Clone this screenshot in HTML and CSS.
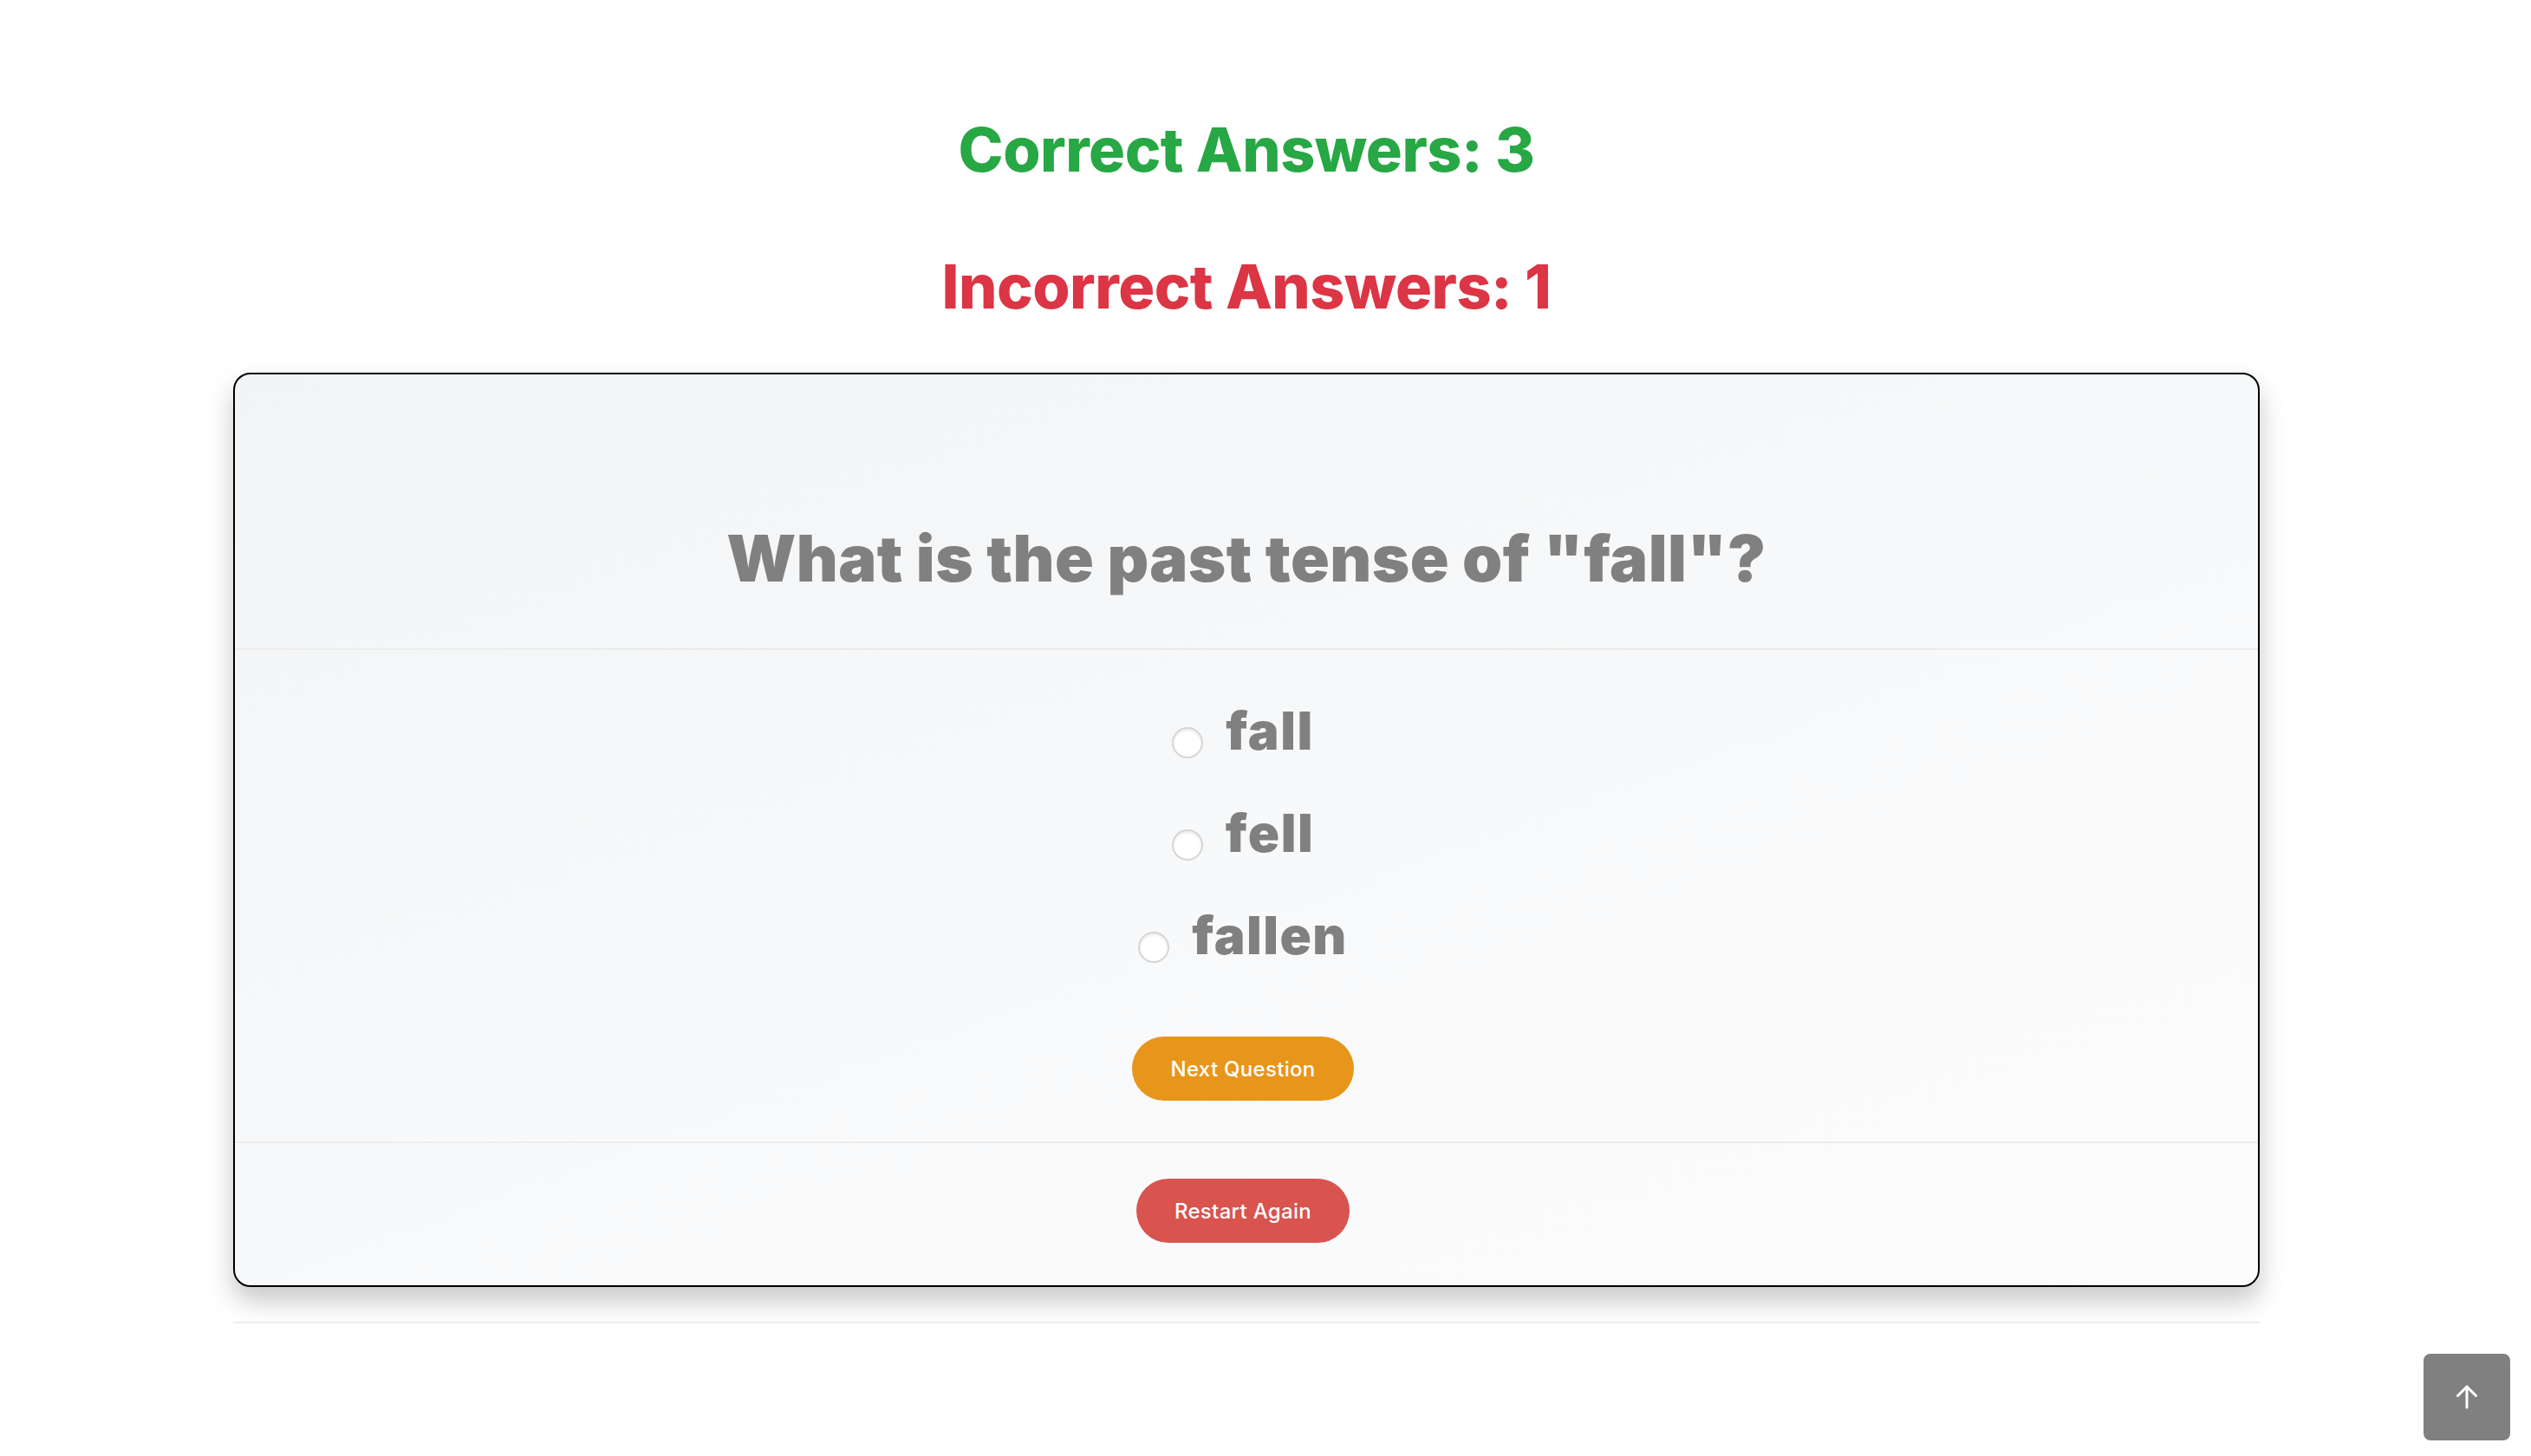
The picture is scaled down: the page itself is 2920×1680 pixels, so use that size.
FILE: index.html
```html
<!DOCTYPE html>
<html lang="en">
<head>
<meta charset="utf-8">
<title>Quiz</title>
<link rel="stylesheet" href="styles.css">
</head>
<body>
<main class="page">
  <h1 class="score score-correct">Correct Answers: 3</h1>
  <h1 class="score score-incorrect">Incorrect Answers: 1</h1>
  <section class="card">
    <div class="card-header">
      <h2 class="question">What is the past tense of "fall"?</h2>
    </div>
    <div class="card-body">
      <ul class="options">
        <li class="option"><label><input class="radio" type="radio" name="answer"><span>fall</span></label></li>
        <li class="option"><label><input class="radio" type="radio" name="answer"><span>fell</span></label></li>
        <li class="option"><label><input class="radio" type="radio" name="answer"><span>fallen</span></label></li>
      </ul>
      <button class="btn btn-next" type="button">Next Question</button>
    </div>
    <div class="card-footer">
      <button class="btn btn-restart" type="button">Restart Again</button>
    </div>
  </section>
  <hr class="rule">
</main>
<a class="to-top" href="#" aria-label="Back to top">
  <svg width="30" height="30" viewBox="0 0 30 30" fill="none" stroke="#fff" stroke-width="3" stroke-linecap="round" stroke-linejoin="round">
    <path d="M15 27V3"/>
    <path d="M4.5 13.5L15 3l10.5 10.5"/>
  </svg>
</a>
</body>
</html>
```
FILE: styles.css
```css
html, body {
  margin: 0;
  padding: 0;
  background: #ffffff;
}

body {
  font-family: Inter, "Liberation Sans", sans-serif;
}

.page {
  width: 2338px;
  margin-left: 269px;
  padding-top: 131px;
  display: flex;
  flex-direction: column;
}

.score {
  margin: 0;
  text-align: center;
  font-size: 70px;
  font-weight: 800;
  line-height: 84px;
  letter-spacing: -0.5px;
}

.score-correct {
  color: #28a745;
}

.score-incorrect {
  color: #dc3545;
  margin-top: 74px;
}

.card {
  margin-top: 57px;
  border: 2px solid #000;
  border-radius: 20px;
  background: linear-gradient(160deg, #f3f4f6 0%, #f8f9fa 55%, #fcfcfd 100%);
  box-shadow: 0 16px 30px rgba(0, 0, 0, 0.22);
  overflow: hidden;
}

.card-header {
  padding: 168px 0 59px;
  border-bottom: 2px solid #ebebeb;
}

.question {
  margin: 0;
  text-align: center;
  font-size: 74px;
  line-height: 89px;
  font-weight: 900;
  color: #808080;
  letter-spacing: 0.4px;
}

.card-body {
  padding: 34px 8px 47px 0;
  border-bottom: 2px solid #ececec;
  display: flex;
  flex-direction: column;
  align-items: center;
}

.options {
  list-style: none;
  margin: 0;
  padding: 0;
  display: flex;
  flex-direction: column;
  align-items: center;
}

.option {
  font-size: 60px;
  line-height: 118px;
  font-weight: 900;
  letter-spacing: 1.5px;
  color: #808080;
}

.option label {
  display: inline-flex;
  align-items: baseline;
}

.radio {
  appearance: none;
  -webkit-appearance: none;
  width: 36px;
  height: 36px;
  margin: 0 26px 0 0;
  border: 2px solid #d6d6d6;
  border-radius: 50%;
  background: #ffffff;
  box-shadow: inset 0 2px 3px rgba(0, 0, 0, 0.08);
  position: relative;
  top: 10px;
}

.btn {
  border: 0;
  border-radius: 37px;
  height: 74px;
  padding: 0 44px;
  font-family: Inter, "Liberation Sans", sans-serif;
  font-size: 24px;
  font-weight: 500;
  letter-spacing: 0.3px;
  color: #ffffff;
  cursor: pointer;
}

.btn-next {
  margin-top: 58px;
  background: #e8951b;
}

.card-footer {
  padding: 41px 8px 49px 0;
  display: flex;
  justify-content: center;
}

.btn-restart {
  background: #d9534f;
}

.rule {
  margin: 40px 0 0;
  border: 0;
  height: 2px;
  background: #ececec;
}

.to-top {
  position: fixed;
  right: 24px;
  bottom: 18px;
  width: 100px;
  height: 100px;
  border-radius: 8px;
  background: #808080;
  display: flex;
  align-items: center;
  justify-content: center;
}
```
